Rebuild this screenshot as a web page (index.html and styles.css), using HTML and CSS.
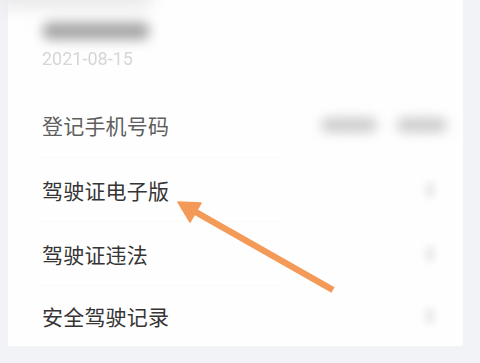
FILE: index.html
```html
<!DOCTYPE html>
<html lang="zh-CN">
<head>
<meta charset="utf-8">
<link rel="stylesheet" href="styles.css">
</head>
<body>
<div class="page">
  <div class="topblur"></div>
  <div class="card">
    <div class="header">
      <div class="name-blur"></div>
      <div class="date">2021-08-15</div>
    </div>
    <div class="row row1">
      <span class="label muted">登记手机号码</span>
      <span class="value-blur"><i class="b1"></i><i class="b2"></i></span>
    </div>
    <div class="row row2">
      <span class="label">驾驶证电子版</span>
      <span class="chev"></span>
    </div>
    <div class="row row3">
      <span class="label">驾驶证违法</span>
      <span class="chev"></span>
    </div>
    <div class="row row4">
      <span class="label">安全驾驶记录</span>
      <span class="chev"></span>
    </div>
  </div>
  <svg class="arrow" width="480" height="363" viewBox="0 0 480 363">
    <line x1="333" y1="290" x2="193" y2="210.5" stroke="#f49a58" stroke-width="6.5"/>
    <polygon points="178,202 201,203 190,222" fill="#f49a58" stroke="#f49a58" stroke-width="1.5" stroke-linejoin="round"/>
  </svg>
</div>
</body>
</html>
```
FILE: styles.css
```css
html, body {
  margin: 0;
  padding: 0;
}
body {
  width: 480px;
  height: 363px;
  overflow: hidden;
  background: #f1f3f7;
  font-family: "Noto Sans CJK SC", "Noto Sans", sans-serif;
}
.page {
  position: relative;
  width: 480px;
  height: 363px;
}
.topblur {
  position: absolute;
  left: 0;
  top: -14px;
  width: 150px;
  height: 22px;
  background: #e8e8e8;
  filter: blur(8px);
}
.card {
  margin-left: 8px;
  width: 455px;
  height: 346px;
  background: #fefefe;
  display: flex;
  flex-direction: column;
}
.header {
  height: 92px;
  padding-left: 34px;
  box-sizing: border-box;
  display: flex;
  flex-direction: column;
}
.name-blur {
  margin-top: 22px;
  width: 108px;
  height: 18px;
  border-radius: 9px;
  background: #a8a8a8;
  filter: blur(6px);
}
.date {
  margin-top: 8px;
  font-family: "Roboto", "Noto Sans", sans-serif;
  font-size: 18px;
  line-height: 22px;
  color: #d6d6d6;
  filter: blur(0.7px);
}
.row {
  display: flex;
  align-items: center;
  justify-content: space-between;
  padding: 0 22px 0 34px;
  box-sizing: border-box;
  position: relative;
}
.row1 { height: 66px; }
.row2 { height: 64px; }
.row3 { height: 64px; }
.row4 { height: 60px; }
.row1::after, .row2::after, .row3::after {
  content: "";
  position: absolute;
  left: 32px;
  bottom: 0;
  width: 240px;
  height: 1px;
  background: #fafafa;
}
.label {
  font-size: 21px;
  line-height: 28px;
  color: #353535;
  letter-spacing: 0.2px;
}
.label.muted {
  color: #5e5e5e;
}
.value-blur {
  display: flex;
  gap: 20px;
  margin-right: -6px;
}
.value-blur i {
  display: block;
  height: 14px;
  background: #cacaca;
  border-radius: 7px;
  filter: blur(6px);
}
.value-blur .b1 { width: 56px; }
.value-blur .b2 { width: 50px; }
.chev {
  width: 10px;
  height: 16px;
  background: #ededed;
  filter: blur(3px);
  border-radius: 4px;
  margin-right: 6px;
}
.arrow {
  position: absolute;
  left: 0;
  top: 0;
}
```
